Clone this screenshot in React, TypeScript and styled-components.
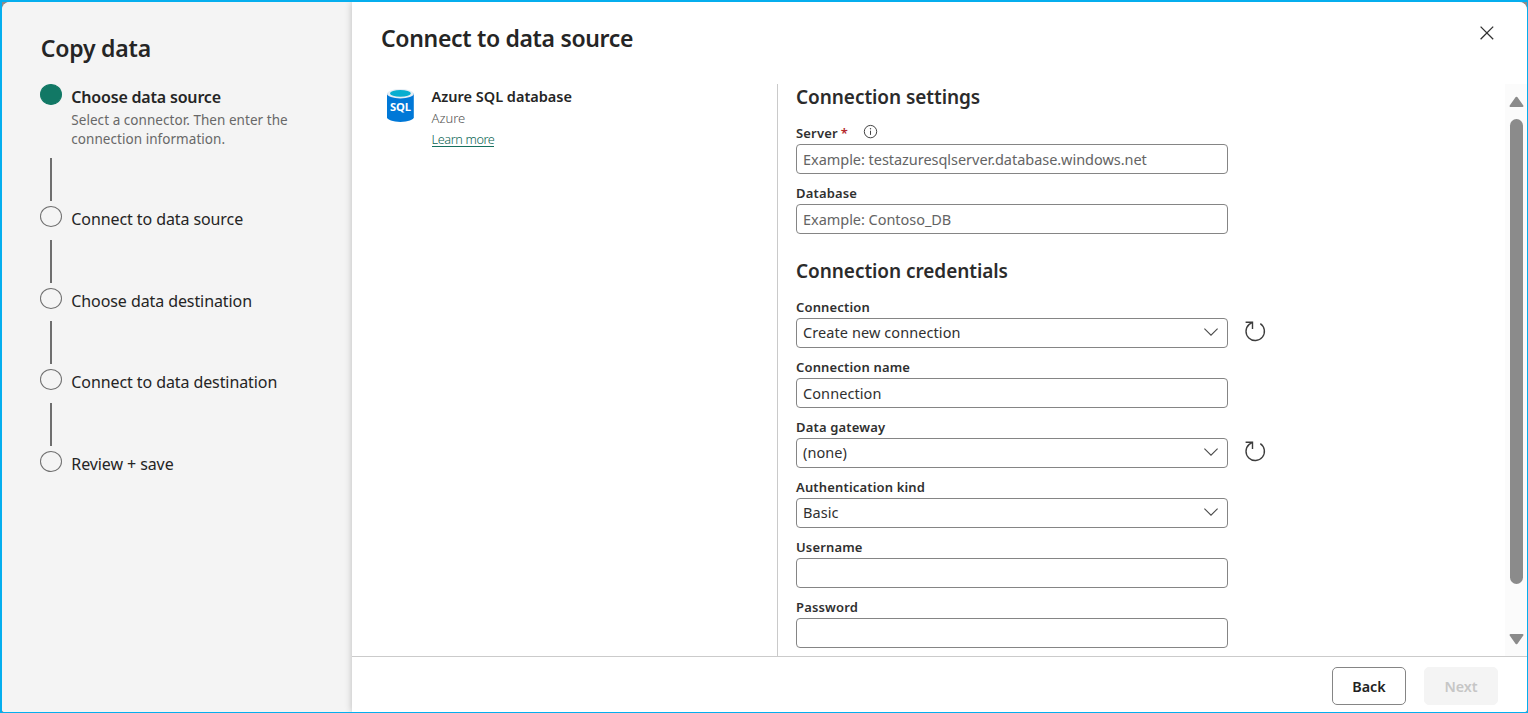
import React from "react";
import styled, { createGlobalStyle } from "styled-components";

const GlobalStyle = createGlobalStyle`
  *, *::before, *::after { box-sizing: border-box; }
  body {
    margin: 0;
    background: #8c8c8c;
    color: #252525;
    font-family: "Noto Sans", "Open Sans", sans-serif;
  }
  h1, h2, h3, p, ol { margin: 0; padding: 0; }
  button, input { font-family: inherit; }
`;

const Frame = styled.div`
  width: 1528px;
  height: 713px;
  border: solid #05aeee;
  border-width: 2px 1px 1px 2px;
`;

const Dialog = styled.div`
  display: flex;
  height: 100%;
  overflow: hidden;
  border-radius: 8px 8px 3px 3px;
  background: #fff;
`;

const Sidebar = styled.aside`
  flex: 0 0 350px;
  padding: 28px 24px 0 38px;
  background: #f4f4f4;
`;

const SidebarTitle = styled.h1`
  height: 54px;
  padding-left: 0.7px;
  font-size: 23px;
  font-weight: 600;
  line-height: 36px;
  letter-spacing: -0.2px;
`;

const Steps = styled.ol`
  list-style: none;
`;

const StepItem = styled.li<{ $tall?: boolean }>`
  display: flex;
  gap: 9.3px;
  height: ${(p) => (p.$tall ? 122 : 81.6)}px;
`;

const Rail = styled.div`
  flex: 0 0 22px;
  display: flex;
  flex-direction: column;
  align-items: center;
  justify-content: space-between;
  padding-bottom: 5px;
`;

const Dot = styled.span<{ $active?: boolean }>`
  width: 22px;
  height: 21px;
  border: 1px solid ${(p) => (p.$active ? "#117865" : "#707070")};
  border-radius: 50%;
  background: ${(p) => (p.$active ? "#117865" : "transparent")};
`;

const Connector = styled.span`
  width: 2px;
  height: 43px;
  background: #6e6e6e;
`;

const StepText = styled.div`
  padding-top: 1px;
  white-space: nowrap;
`;

const StepTitle = styled.h3<{ $active?: boolean }>`
  font-size: 16px;
  font-weight: ${(p) => (p.$active ? 600 : 400)};
  line-height: 24px;
  letter-spacing: ${(p) => (p.$active ? -0.19 : -0.09)}px;
`;

const StepHint = styled.p`
  width: 225px;
  margin-top: 2px;
  font-size: 13.5px;
  line-height: 19px;
  letter-spacing: 0.05px;
  color: #686868;
  white-space: normal;
`;

const Main = styled.main`
  flex: 1;
  min-width: 0;
  display: flex;
  flex-direction: column;
  background: #fff;
  box-shadow: 0 0 7px rgba(0, 0, 0, 0.24);
`;

const Header = styled.header`
  flex: 0 0 82px;
  display: flex;
  justify-content: space-between;
  align-items: flex-start;
  padding: 18px 32px 0 29px;
`;

const PageTitle = styled.h2`
  font-size: 23px;
  font-weight: 600;
  line-height: 36px;
  letter-spacing: -0.33px;
`;

const CloseButton = styled.button`
  display: flex;
  margin-top: 5px;
  padding: 0;
  border: 0;
  background: none;
`;

const Body = styled.div`
  flex: 1;
  min-height: 0;
  display: flex;
`;

const SourcePane = styled.section`
  flex: 0 0 426px;
  display: flex;
  gap: 17.5px;
  padding: 4px 0 0 35px;
  border-right: 1px solid #cacaca;
`;

const SourceInfo = styled.div`
  display: flex;
  flex-direction: column;
  align-items: flex-start;
  margin-top: -2px;
`;

const SourceName = styled.h3`
  font-size: 14.5px;
  font-weight: 600;
  line-height: 21px;
`;

const SourceVendor = styled.span`
  font-size: 13px;
  font-weight: 300;
  line-height: 22px;
  color: #555;
`;

const LearnMore = styled.a`
  height: 17px;
  margin-top: 1px;
  border-bottom: 1px solid #16705e;
  font-size: 12.7px;
  font-weight: 300;
  line-height: 18px;
  letter-spacing: -0.38px;
  color: #0b6553;
`;

const FormPane = styled.section`
  flex: 1;
  padding-left: 18px;
`;

const SectionTitle = styled.h3`
  height: 40px;
  font-size: 19px;
  font-weight: 600;
  line-height: 26px;
  letter-spacing: -0.06px;
  color: #2b2b2b;
`;

const Group = styled.div`
  display: flex;
  flex-direction: column;
  gap: 10px;
  margin-bottom: 24px;
`;

const FieldLabel = styled.label`
  display: flex;
  height: 20px;
  font-size: 13px;
  font-weight: 600;
  line-height: 18px;
  letter-spacing: 0.16px;
  color: #303030;
`;

const Required = styled.span`
  margin-left: 3px;
  color: #b3282d;
`;

const InfoSlot = styled.span`
  display: flex;
  align-self: flex-start;
  margin: 0 0 0 15px;
`;

const ControlRow = styled.div`
  display: flex;
  gap: 16px;
`;

const TextInput = styled.input`
  width: 432px;
  height: 30px;
  padding: 0 6px 1px;
  border: 1px solid #858585;
  border-radius: 4px;
  outline: 0;
  background: #fff;
  font-size: 14.5px;
  letter-spacing: 0.08px;
  color: #303030;

  &::placeholder {
    color: #646464;
    opacity: 1;
    letter-spacing: -0.04px;
  }
`;

const Select = styled.div`
  display: flex;
  align-items: center;
  justify-content: space-between;
  width: 432px;
  height: 30px;
  padding: 0 9px 2px 6px;
  border: 1px solid #858585;
  border-radius: 4px;
  font-size: 14.5px;
  line-height: 26px;
  letter-spacing: 0.08px;
  color: #303030;
`;

const RefreshButton = styled.button`
  display: flex;
  height: 22px;
  margin-top: 2px;
  padding: 0;
  border: 0;
  background: none;
`;

const ScrollTrack = styled.div`
  flex: 0 0 22px;
  display: flex;
  flex-direction: column;
  align-items: center;
  padding: 12px 0 11px;
  background: #fbfbfb;
`;

const ScrollThumb = styled.div`
  width: 13px;
  height: 465px;
  margin: 11px 0 auto;
  border-radius: 7px;
  background: #8b8b8b;
`;

const Footer = styled.footer`
  flex: 0 0 56px;
  display: flex;
  justify-content: flex-end;
  gap: 18px;
  padding: 10px 29px 0 0;
  border-top: 1px solid #cbcbcb;
`;

const ActionButton = styled.button<{ $muted?: boolean }>`
  width: 74px;
  height: 38px;
  padding: 0;
  border: 1px solid ${(p) => (p.$muted ? "#f4f4f4" : "#858585")};
  border-radius: 5px;
  background: ${(p) => (p.$muted ? "#f4f4f4" : "#fff")};
  color: ${(p) => (p.$muted ? "#c6c6c6" : "#222")};
  font-size: 14.3px;
  font-weight: 600;
`;

const CloseIcon = () => (
  <svg width="16" height="16" viewBox="0 0 16 16" fill="none" stroke="#333" strokeWidth="1.3">
    <path d="M1.6 1.6 14.2 14.2M14.2 1.6 1.6 14.2" />
  </svg>
);

const InfoIcon = () => (
  <svg width="15" height="15" viewBox="0 0 15 15" fill="none" stroke="#444">
    <circle cx="7.5" cy="7.6" r="6.2" />
    <path d="M7.5 6.7v4.2" />
    <circle cx="7.5" cy="4.7" r="0.7" fill="#444" stroke="none" />
  </svg>
);

const ChevronIcon = () => (
  <svg width="14" height="8" viewBox="0 0 14 8" fill="none" stroke="#4a4a4a" strokeWidth="1.1">
    <path d="M0.4 0.7 7 7.2 13.6 0.7" />
  </svg>
);

const RefreshIcon = () => (
  <svg width="22" height="22" viewBox="0 0 22 22" fill="none" stroke="#3d3d3d" strokeWidth="1.4">
    <path d="M16.3 3.7A9.2 9.2 0 1 1 5.2 4.4L8.4 2.4" />
    <path d="M1.6 2.3H8.5V9" />
  </svg>
);

const ArrowIcon = ({ down }: { down?: boolean }) => (
  <svg width="15" height="12" viewBox="0 0 15 12" fill="#8b8b8b" stroke="#8b8b8b" strokeWidth="2" strokeLinejoin="round">
    <path d={down ? "M1.5 2H13.5L7.5 10.3Z" : "M1.5 10H13.5L7.5 1.7Z"} />
  </svg>
);

const SqlLogo = () => (
  <svg width="27" height="35" viewBox="0 0 27 35">
    <path d="M0 5.5V29.3C0 31.9 6 33.9 13.4 33.9S26.8 31.9 26.8 29.3V5.5Z" fill="#0078d7" />
    <ellipse cx="13.4" cy="5.7" rx="13.4" ry="4.7" fill="#e6eef5" />
    <ellipse cx="13.4" cy="5.4" rx="10.4" ry="3.4" fill="#08aed0" />
    <text x="13.6" y="23.4" textAnchor="middle" fontSize="11.2" fontWeight="700" fill="#fff" textLength="21" fontFamily="Noto Sans, sans-serif">
      SQL
    </text>
  </svg>
);

type FieldProps = {
  label: string;
  value?: string;
  placeholder?: string;
  select?: boolean;
  refresh?: boolean;
  required?: boolean;
};

const Field = ({ label, value, placeholder, select, refresh, required }: FieldProps) => (
  <div>
    <FieldLabel>
      {label}
      {required && (
        <>
          <Required>*</Required>
          <InfoSlot>
            <InfoIcon />
          </InfoSlot>
        </>
      )}
    </FieldLabel>
    <ControlRow>
      {select ? (
        <Select role="combobox" aria-label={label}>
          {value}
          <ChevronIcon />
        </Select>
      ) : (
        <TextInput aria-label={label} defaultValue={value} placeholder={placeholder} />
      )}
      {refresh && (
        <RefreshButton aria-label="Refresh">
          <RefreshIcon />
        </RefreshButton>
      )}
    </ControlRow>
  </div>
);

const steps = [
  { title: "Choose data source", hint: "Select a connector. Then enter the connection information." },
  { title: "Connect to data source" },
  { title: "Choose data destination" },
  { title: "Connect to data destination" },
  { title: "Review + save" },
];

export default function App() {
  return (
    <Frame>
      <GlobalStyle />
      <Dialog>
        <Sidebar>
          <SidebarTitle>Copy data</SidebarTitle>
          <Steps>
            {steps.map((step, i) => (
              <StepItem key={step.title} $tall={!!step.hint}>
                <Rail>
                  <Dot $active={i === 0} />
                  {i < steps.length - 1 && <Connector />}
                </Rail>
                <StepText>
                  <StepTitle $active={i === 0}>{step.title}</StepTitle>
                  {step.hint && <StepHint>{step.hint}</StepHint>}
                </StepText>
              </StepItem>
            ))}
          </Steps>
        </Sidebar>
        <Main>
          <Header>
            <PageTitle>Connect to data source</PageTitle>
            <CloseButton aria-label="Close">
              <CloseIcon />
            </CloseButton>
          </Header>
          <Body>
            <SourcePane>
              <SqlLogo />
              <SourceInfo>
                <SourceName>Azure SQL database</SourceName>
                <SourceVendor>Azure</SourceVendor>
                <LearnMore>Learn more</LearnMore>
              </SourceInfo>
            </SourcePane>
            <FormPane>
              <SectionTitle>Connection settings</SectionTitle>
              <Group>
                <Field label="Server" placeholder="Example: testazuresqlserver.database.windows.net" required />
                <Field label="Database" placeholder="Example: Contoso_DB" />
              </Group>
              <SectionTitle>Connection credentials</SectionTitle>
              <Group>
                <Field label="Connection" value="Create new connection" select refresh />
                <Field label="Connection name" value="Connection" />
                <Field label="Data gateway" value="(none)" select refresh />
                <Field label="Authentication kind" value="Basic" select />
                <Field label="Username" />
                <Field label="Password" />
              </Group>
            </FormPane>
            <ScrollTrack>
              <ArrowIcon />
              <ScrollThumb />
              <ArrowIcon down />
            </ScrollTrack>
          </Body>
          <Footer>
            <ActionButton>Back</ActionButton>
            <ActionButton $muted>Next</ActionButton>
          </Footer>
        </Main>
      </Dialog>
    </Frame>
  );
}
